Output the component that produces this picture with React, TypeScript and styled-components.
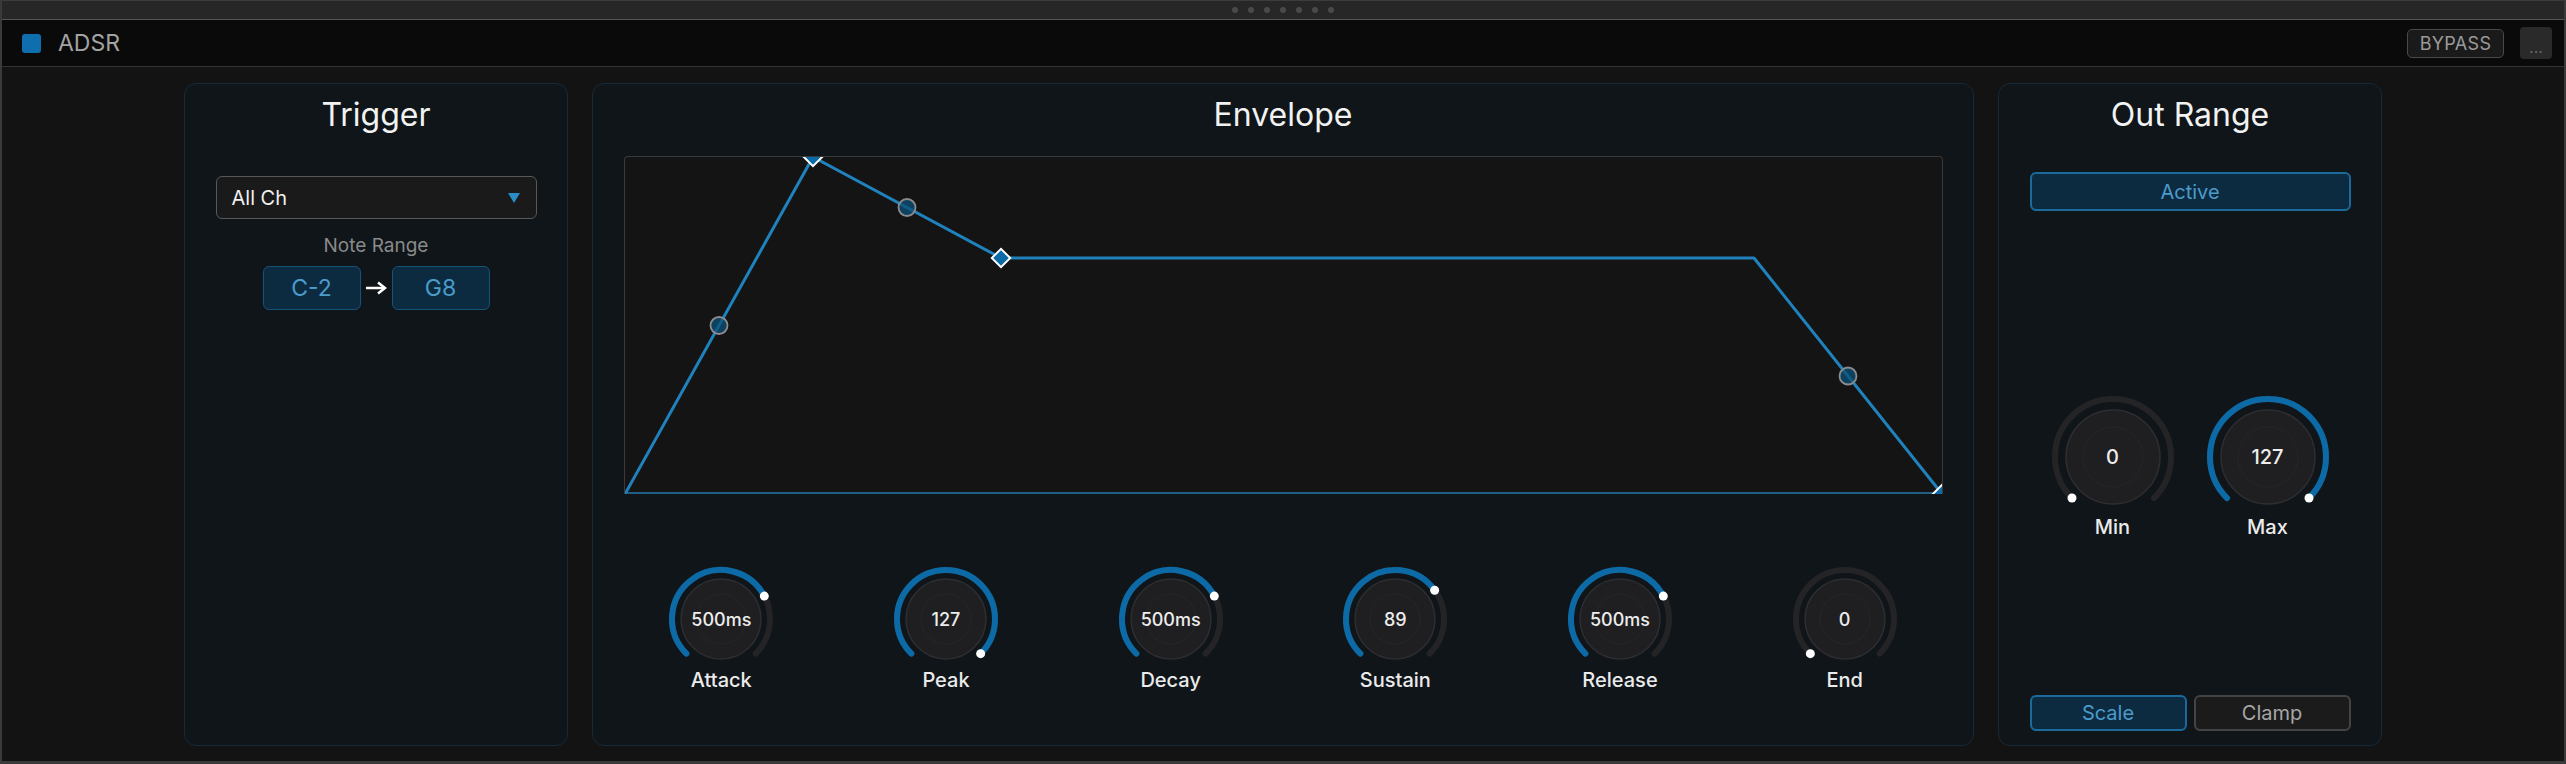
import styled, { createGlobalStyle } from "styled-components";

const GlobalStyle = createGlobalStyle`
  html, body {
    margin: 0;
    padding: 0;
    background: #131313;
  }
  body {
    font-family: Inter, "Noto Sans", "Liberation Sans", sans-serif;
  }
`;

const Frame = styled.div`
  width: 2566px;
  height: 764px;
  box-sizing: border-box;
  display: flex;
  flex-direction: column;
  background: #131313;
  border-left: 2px solid #3a3a3a;
  border-right: 2px solid #3a3a3a;
  border-bottom: 3px solid #3a3a3a;
`;

const DragBar = styled.div`
  height: 18px;
  flex-shrink: 0;
  background: #272727;
  border-top: 1px solid #3c3c3c;
  border-bottom: 1px solid #555555;
  display: flex;
  align-items: center;
  justify-content: center;
  gap: 10px;
`;

const Grip = styled.span`
  width: 6px;
  height: 6px;
  border-radius: 50%;
  background: #4a4a4a;
`;

const Header = styled.div`
  height: 46px;
  flex-shrink: 0;
  background: #0a0a0a;
  border-bottom: 1px solid #343434;
  display: flex;
  align-items: center;
  padding: 0 12px 0 20px;
`;

const ModuleIcon = styled.span`
  width: 19px;
  height: 19px;
  border-radius: 3px;
  background: #0f6fae;
`;

const ModuleName = styled.span`
  margin-left: 17px;
  font-size: 23px;
  color: #a3a3a3;
  flex: 1;
`;

const BypassButton = styled.button`
  height: 29px;
  width: 97px;
  box-sizing: border-box;
  border: 1.5px solid #494949;
  border-radius: 5px;
  background: #1a1a1a;
  color: #9a9a9a;
  font-family: inherit;
  font-size: 18px;
  letter-spacing: 0.3px;
  padding: 0;
`;

const MoreButton = styled.button`
  margin-left: 16px;
  width: 32px;
  height: 32px;
  border: none;
  border-radius: 4px;
  background: #2a2a2a;
  color: #666666;
  font-family: inherit;
  font-size: 16px;
  padding: 8px 0 0;
`;

const Body = styled.div`
  flex: 1;
  display: flex;
  justify-content: center;
  gap: 24px;
  padding: 16px 0 15px;
`;

const Panel = styled.section<{ $width: number }>`
  width: ${(p) => p.$width}px;
  box-sizing: border-box;
  background: #0f1519;
  border: 1.5px solid #172a38;
  border-radius: 12px;
  display: flex;
  flex-direction: column;
  align-items: center;
  padding: 11px 0 14px;
`;

const Title = styled.h2`
  margin: 0;
  font-size: 32px;
  line-height: 40px;
  font-weight: 400;
  color: #f2f2f2;
`;

const Select = styled.div`
  margin-top: 41px;
  width: 321px;
  height: 43px;
  box-sizing: border-box;
  border: 1.5px solid #585858;
  border-radius: 6px;
  background: #1a1a1a;
  display: flex;
  align-items: center;
  justify-content: space-between;
  padding: 0 16px 0 15px;
  color: #f0f0f0;
  font-size: 20px;
`;

const SubLabel = styled.div`
  margin-top: 15px;
  font-size: 19px;
  line-height: 24px;
  color: #8a8a8a;
`;

const NoteRow = styled.div`
  margin-top: 8px;
  display: flex;
  align-items: center;
`;

const NoteBox = styled.div`
  width: 98px;
  height: 44px;
  box-sizing: border-box;
  border: 1.5px solid #155479;
  border-radius: 6px;
  background: #0c2b40;
  color: #4b9bcb;
  font-size: 23px;
  display: flex;
  align-items: center;
  justify-content: center;
`;

const ArrowSlot = styled.div`
  width: 31px;
  display: flex;
  justify-content: center;
`;

const Graph = styled.div`
  margin-top: 21px;
  width: 1317px;
  height: 337px;
  border: 1.5px solid #3a3a3a;
  border-bottom: none;
  border-radius: 4px 4px 0 0;
  background: #141414;
  display: flex;
`;

const KnobRow = styled.div`
  margin-top: 70px;
  width: 100%;
  box-sizing: border-box;
  padding: 0 16px;
  display: grid;
  grid-template-columns: repeat(6, 1fr);
`;

const KnobCell = styled.div`
  display: flex;
  flex-direction: column;
  align-items: center;
`;

const KnobFace = styled.div<{ $size: number }>`
  display: grid;
  width: ${(p) => p.$size}px;
  height: ${(p) => p.$size}px;
  place-items: center;
  & > * {
    grid-area: 1 / 1;
  }
`;

const KnobValue = styled.span<{ $big?: boolean }>`
  font-size: ${(p) => (p.$big ? 20 : 18)}px;
  font-weight: 500;
  color: #ededed;
`;

const KnobLabel = styled.span`
  margin-top: -6px;
  font-size: 20px;
  line-height: 24px;
  font-weight: 500;
  color: #ebebeb;
`;

const ActiveButton = styled.button`
  margin-top: 37px;
  width: 321px;
  height: 39px;
  box-sizing: border-box;
  border: 2px solid #1a6a9c;
  border-radius: 6px;
  background: #0d2b40;
  color: #4b9bcb;
  font-family: inherit;
  font-size: 20px;
  padding: 0;
`;

const RangeKnobs = styled.div`
  margin-top: 182px;
  display: flex;
  gap: 27px;
`;

const Spacer = styled.div`
  flex: 1;
`;

const ModeRow = styled.div`
  display: flex;
  gap: 7px;
`;

const ModeButton = styled.button<{ $on?: boolean }>`
  width: 157px;
  height: 36px;
  box-sizing: border-box;
  border: 2px solid ${(p) => (p.$on ? "#1a6a9c" : "#444444")};
  border-radius: 6px;
  background: ${(p) => (p.$on ? "#0d2b40" : "#1b1b1b")};
  color: ${(p) => (p.$on ? "#4b9bcb" : "#a6a6a6")};
  font-family: inherit;
  font-size: 20px;
  padding: 0;
`;

const BLUE = "#0c6aa6";

function polar(cx: number, cy: number, r: number, deg: number) {
  const a = (deg * Math.PI) / 180;
  return [cx + r * Math.sin(a), cy - r * Math.cos(a)];
}

function arc(cx: number, cy: number, r: number, from: number, to: number) {
  const [x1, y1] = polar(cx, cy, r, from);
  const [x2, y2] = polar(cx, cy, r, to);
  const large = to - from > 180 ? 1 : 0;
  return `M ${x1} ${y1} A ${r} ${r} 0 ${large} 1 ${x2} ${y2}`;
}

interface IKnobProps {
  value: string;
  label: string;
  amount: number;
  big?: boolean;
}

function Knob({ value, label, amount, big }: IKnobProps) {
  const size = big ? 128 : 110;
  const c = size / 2;
  const r = big ? 58 : 49;
  const body = big ? 47 : 40;
  const inner = big ? 30 : 25;
  const end = -135 + 270 * amount;
  const [dx, dy] = polar(c, c, r, end);

  return (
    <KnobCell>
      <KnobFace $size={size}>
        <svg width={size} height={size}>
          <path d={arc(c, c, r, -135, 135)} stroke="#242426" strokeWidth={6} fill="none" strokeLinecap="round" />
          {amount > 0 && (
            <path d={arc(c, c, r, -135, end)} stroke={BLUE} strokeWidth={6} fill="none" strokeLinecap="round" />
          )}
          <circle cx={c} cy={c} r={body} fill="#1f1f21" stroke="#2e2e31" strokeWidth={1.5} />
          <circle cx={c} cy={c} r={inner} fill="none" stroke="#262628" strokeWidth={1} />
          <circle cx={dx} cy={dy} r={4.5} fill="#ffffff" />
        </svg>
        <KnobValue $big={big}>{value}</KnobValue>
      </KnobFace>
      <KnobLabel>{label}</KnobLabel>
    </KnobCell>
  );
}

function Diamond({ x, y }: { x: number; y: number }) {
  return (
    <rect
      x={x - 6.5}
      y={y - 6.5}
      width={13}
      height={13}
      transform={`rotate(45 ${x} ${y})`}
      fill={BLUE}
      stroke="#ffffff"
      strokeWidth={2}
    />
  );
}

function Handle({ x, y }: { x: number; y: number }) {
  return <circle cx={x} cy={y} r={8.5} fill="rgba(12, 80, 122, 0.75)" stroke="#8c8c8c" strokeWidth={1.8} />;
}

function EnvelopeGraph() {
  const w = 1317;
  const h = 337;
  const sus = 101;
  const pts: [number, number][] = [
    [0, h],
    [188, 0],
    [376, sus],
    [1129, sus],
    [w, h],
  ];

  return (
    <svg width={w} height={h} style={{ overflow: "hidden" }}>
      <line x1={0} y1={h - 1} x2={w} y2={h - 1} stroke="#1f5f85" strokeWidth={2} />
      <polyline
        points={pts.map((p) => p.join(",")).join(" ")}
        fill="none"
        stroke="#1f82bd"
        strokeWidth={3}
        strokeLinejoin="round"
      />
      <Handle x={94} y={168.5} />
      <Handle x={282} y={50.5} />
      <Handle x={1223} y={219} />
      <Diamond x={188} y={0} />
      <Diamond x={376} y={sus} />
      <Diamond x={w} y={h} />
    </svg>
  );
}

const envKnobs = [
  { value: "500ms", label: "Attack", amount: 0.73 },
  { value: "127", label: "Peak", amount: 1 },
  { value: "500ms", label: "Decay", amount: 0.73 },
  { value: "89", label: "Sustain", amount: 0.7 },
  { value: "500ms", label: "Release", amount: 0.73 },
  { value: "0", label: "End", amount: 0 },
];

function App() {
  return (
    <>
      <GlobalStyle />
      <Frame>
        <DragBar>
          {Array.from({ length: 7 }).map((_, i) => (
            <Grip key={i} />
          ))}
        </DragBar>
        <Header>
          <ModuleIcon />
          <ModuleName>ADSR</ModuleName>
          <BypassButton>BYPASS</BypassButton>
          <MoreButton>...</MoreButton>
        </Header>

        <Body>
          <Panel $width={384}>
            <Title>Trigger</Title>
            <Select>
              <span>All Ch</span>
              <svg width="12" height="10" viewBox="0 0 12 10">
                <path d="M0 0 H12 L6 10 Z" fill="#2a8cc8" />
              </svg>
            </Select>
            <SubLabel>Note Range</SubLabel>
            <NoteRow>
              <NoteBox>C-2</NoteBox>
              <ArrowSlot>
                <svg width="22" height="14" viewBox="0 0 22 14">
                  <path d="M1 7 H19" stroke="#ffffff" strokeWidth="2.5" />
                  <path d="M13 1.5 L20 7 L13 12.5" stroke="#ffffff" strokeWidth="2.5" fill="none" />
                </svg>
              </ArrowSlot>
              <NoteBox>G8</NoteBox>
            </NoteRow>
          </Panel>

          <Panel $width={1382}>
            <Title>Envelope</Title>
            <Graph>
              <EnvelopeGraph />
            </Graph>
            <KnobRow>
              {envKnobs.map((k) => (
                <Knob key={k.label} value={k.value} label={k.label} amount={k.amount} />
              ))}
            </KnobRow>
          </Panel>

          <Panel $width={384}>
            <Title>Out Range</Title>
            <ActiveButton>Active</ActiveButton>
            <RangeKnobs>
              <Knob big value="0" label="Min" amount={0} />
              <Knob big value="127" label="Max" amount={1} />
            </RangeKnobs>
            <Spacer />
            <ModeRow>
              <ModeButton $on>Scale</ModeButton>
              <ModeButton>Clamp</ModeButton>
            </ModeRow>
          </Panel>
        </Body>
      </Frame>
    </>
  );
}

export default App;
